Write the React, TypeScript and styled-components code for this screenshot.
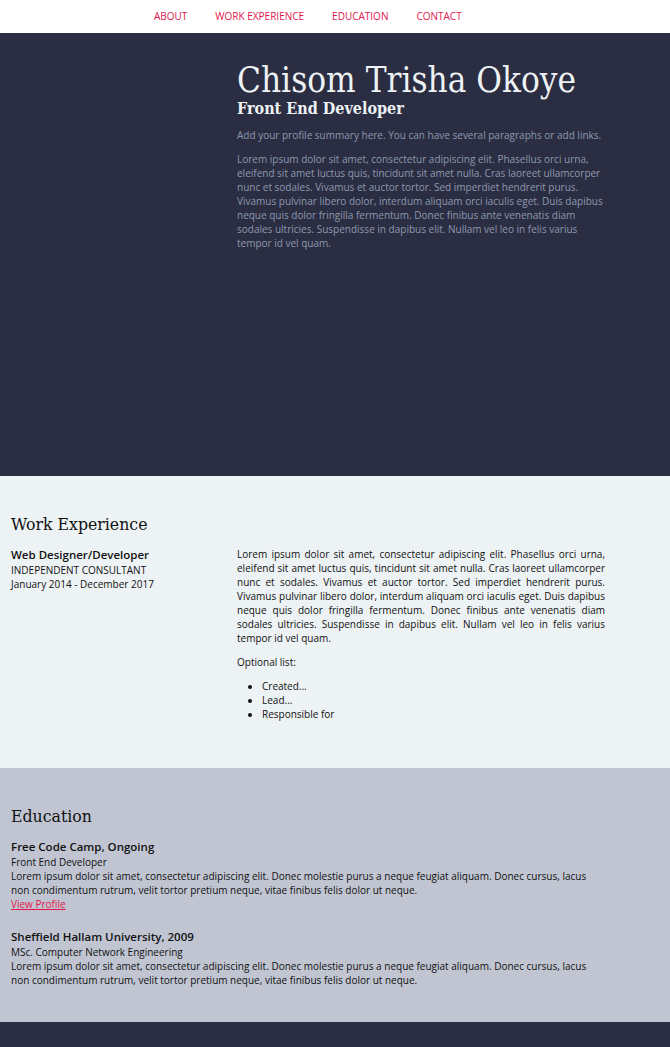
import React from "react";
import styled, { createGlobalStyle } from "styled-components";

const Global = createGlobalStyle`
  html, body { margin: 0; padding: 0; }
  body { font-family: "Open Sans", "Liberation Sans", sans-serif; font-size: 10px; color: #111; background: #2b2d42; }
  * { box-sizing: border-box; }
`;

const serif = `"DejaVu Serif Condensed", "DejaVu Serif", serif`;

const Nav = styled.nav`
  height: 33px;
  background: #ffffff;
  display: flex;
  align-items: center;
  padding-left: 140px;
`;

const NavList = styled.ul`
  list-style: none;
  margin: 0;
  padding: 0;
  display: flex;
`;

const NavLink = styled.a`
  display: block;
  padding: 0 14px;
  font-size: 10px;
  color: #e0164c;
  text-transform: uppercase;
  text-decoration: none;
  line-height: 33px;
`;

const Hero = styled.header`
  background: #2b2d42;
  height: 443px;
  padding: 28px 65px 0 237px;
`;

const Name = styled.h1`
  margin: 0;
  font-family: ${serif};
  font-weight: normal;
  font-size: 34.8px;
  line-height: 38px;
  color: #edf2f4;
`;

const Role = styled.h2`
  margin: 0 0 9px;
  font-family: ${serif};
  font-weight: bold;
  font-size: 16px;
  line-height: 20px;
  color: #edf2f4;
`;

const Summary = styled.p`
  margin: 0 0 10px;
  font-size: 10px;
  line-height: 14px;
  color: #8d99ae;
`;

const Section = styled.section<{ $bg: string }>`
  background: ${(p) => p.$bg};
  padding: 36px 11px 0;
`;

const SectionTitle = styled.h2`
  margin: 0 0 11px;
  font-family: ${serif};
  font-weight: normal;
  font-size: 17.5px;
  line-height: 24px;
  color: #111;
`;

const JobRow = styled.div`
  display: grid;
  grid-template-columns: 226px 368px;
`;

const JobMeta = styled.div`
  display: flex;
  flex-direction: column;
`;

const ItemTitle = styled.h3`
  margin: 0;
  font-size: 11.5px;
  font-weight: 600;
  line-height: 16px;
  color: #111;
`;

const Line = styled.span`
  font-size: 10px;
  line-height: 14px;
`;

const Body = styled.p<{ $justify?: boolean }>`
  margin: 0 0 10px;
  font-size: 10px;
  line-height: 14px;
  text-align: ${(p) => (p.$justify ? "justify" : "left")};
`;

const List = styled.ul`
  margin: 0;
  padding-left: 25px;
  font-size: 10px;
  line-height: 14px;
`;

const EduItem = styled.div`
  display: flex;
  flex-direction: column;
  max-width: 580px;
  margin-bottom: 18px;
`;

const ProfileLink = styled.a`
  color: #e0164c;
  font-size: 10px;
  line-height: 14px;
  text-decoration: underline;
`;

const Footer = styled.footer`
  background: #2b2d42;
  height: 40px;
`;

const lorem =
  "Lorem ipsum dolor sit amet, consectetur adipiscing elit. Phasellus orci urna, eleifend sit amet luctus quis, tincidunt sit amet nulla. Cras laoreet ullamcorper nunc et sodales. Vivamus et auctor tortor. Sed imperdiet hendrerit purus. Vivamus pulvinar libero dolor, interdum aliquam orci iaculis eget. Duis dapibus neque quis dolor fringilla fermentum. Donec finibus ante venenatis diam sodales ultricies. Suspendisse in dapibus elit. Nullam vel leo in felis varius tempor id vel quam.";

const eduLorem =
  "Lorem ipsum dolor sit amet, consectetur adipiscing elit. Donec molestie purus a neque feugiat aliquam. Donec cursus, lacus non condimentum rutrum, velit tortor pretium neque, vitae finibus felis dolor ut neque.";

export default function App() {
  return (
    <>
      <Global />
      <Nav>
        <NavList>
          <li><NavLink href="#about">About</NavLink></li>
          <li><NavLink href="#work">Work Experience</NavLink></li>
          <li><NavLink href="#education">Education</NavLink></li>
          <li><NavLink href="#contact">Contact</NavLink></li>
        </NavList>
      </Nav>
      <Hero id="about">
        <Name>Chisom Trisha Okoye</Name>
        <Role>Front End Developer</Role>
        <Summary>Add your profile summary here. You can have several paragraphs or add links.</Summary>
        <Summary>{lorem}</Summary>
      </Hero>
      <Section $bg="#edf2f4" id="work" style={{ height: 292 }}>
        <SectionTitle>Work Experience</SectionTitle>
        <JobRow>
          <JobMeta>
            <ItemTitle>Web Designer/Developer</ItemTitle>
            <Line>INDEPENDENT CONSULTANT</Line>
            <Line>January 2014 - December 2017</Line>
          </JobMeta>
          <div>
            <Body $justify>{lorem}</Body>
            <Body>Optional list:</Body>
            <List>
              <li>Created...</li>
              <li>Lead...</li>
              <li>Responsible for</li>
            </List>
          </div>
        </JobRow>
      </Section>
      <Section $bg="#c0c5d1" id="education" style={{ height: 254 }}>
        <SectionTitle>Education</SectionTitle>
        <EduItem>
          <ItemTitle>Free Code Camp, Ongoing</ItemTitle>
          <Line>Front End Developer</Line>
          <Line>{eduLorem}</Line>
          <div><ProfileLink href="#">View Profile</ProfileLink></div>
        </EduItem>
        <EduItem>
          <ItemTitle>Sheffield Hallam University, 2009</ItemTitle>
          <Line>MSc. Computer Network Engineering</Line>
          <Line>{eduLorem}</Line>
        </EduItem>
      </Section>
      <Footer id="contact" />
    </>
  );
}
